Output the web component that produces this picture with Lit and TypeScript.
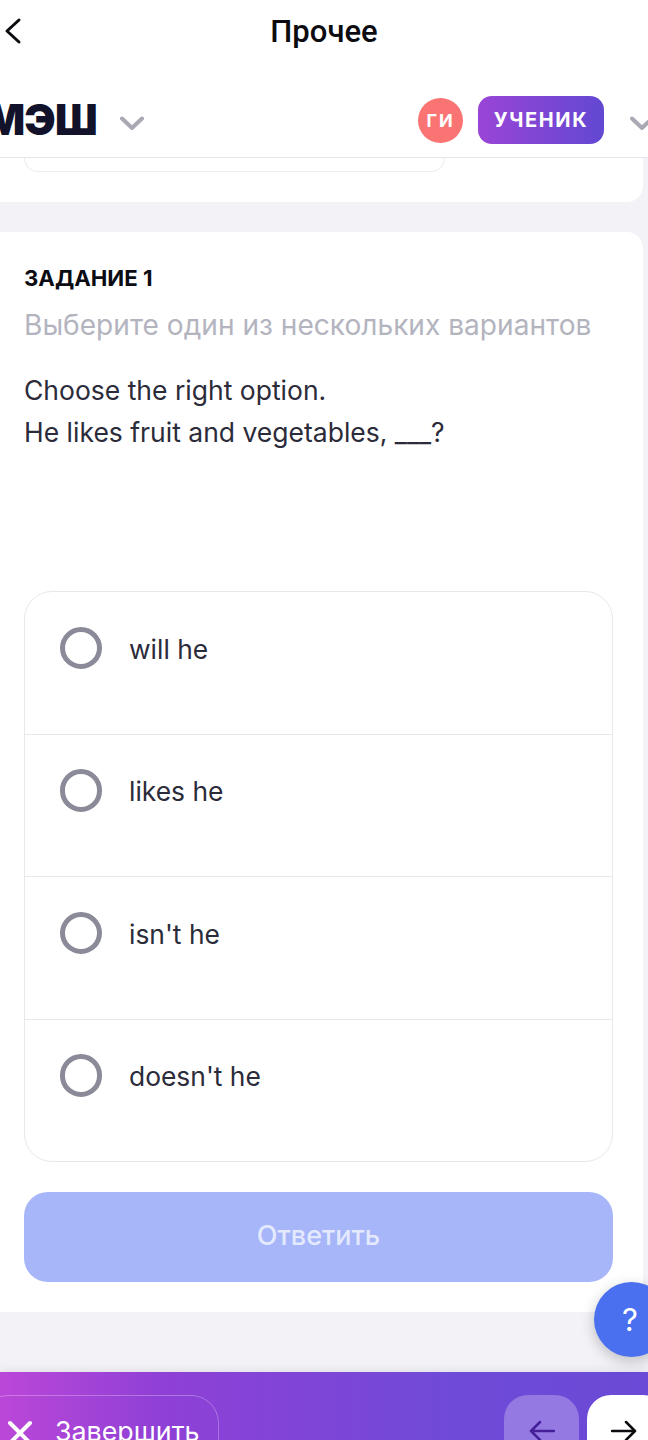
import { LitElement, html, css, svg } from "lit";
import { customElement } from "lit/decorators.js";

const chevron = svg`<path d="M2 2.5 L12 12 L22 2.5" fill="none" stroke="#a9a9b4" stroke-width="4" stroke-linecap="round" stroke-linejoin="round"/>`;

@customElement("app-root")
export class AppRoot extends LitElement {
  static styles = css`
    :host { display: block; width: 648px; height: 1440px; overflow: hidden; position: relative; background: #f2f2f7; font-family: Inter, "Noto Sans", sans-serif; }
    .page { width: 648px; height: 1440px; display: flex; flex-direction: column; overflow: hidden; }
    .top { background: #fff; height: 64px; flex: none; display: flex; align-items: center; justify-content: center; position: relative; }
    .back { position: absolute; left: 4px; top: 17px; width: 18px; height: 28px; }
    .title { font: 500 31px/32px Roboto, sans-serif; color: #0b0b10; }
    .brand { background: #fff; height: 94px; flex: none; box-sizing: border-box; border-bottom: 1px solid #e6e6ea; display: flex; align-items: center; position: relative; overflow: hidden; padding-top: 19px; }
    .logo { font: 900 42px/48px Inter, sans-serif; color: #12122a; margin-left: -15px; letter-spacing: -0.8px; }
    .chev { width: 24px; height: 14px; flex: none; }
    .chev1 { margin-left: 23px; margin-top: 6px; }
    .spacer { flex: 1; }
    .avatar { width: 45px; height: 45px; border-radius: 50%; background: #fa7474; color: #fff; font: 700 18px/45px Inter, sans-serif; letter-spacing: 2px; text-align: center; flex: none; margin-right: 15px; }
    .role { width: 126px; height: 48px; border-radius: 14px; background: linear-gradient(90deg, #9a45d6, #6248d2); color: #fff; font: 700 20px/48px Inter, sans-serif; letter-spacing: 1.6px; text-align: center; flex: none; margin-right: 26px; }
    .chev2 { margin-right: -6px; margin-top: 6px; }
    .prev { background: #fff; height: 44px; width: 643px; flex: none; border-radius: 0 0 16px 0; }
    .prev-inner { margin-left: 24px; width: 421px; height: 14px; box-sizing: border-box; border: 1px solid #ededf0; border-top: none; border-radius: 0 0 24px 24px; }
    .card { margin-top: 30px; background: #fff; width: 643px; height: 1080px; flex: none; border-radius: 0 16px 16px 0; box-sizing: border-box; padding: 30px 30px 30px 24px; display: flex; flex-direction: column; }
    .task { font: 700 22.2px/32px Inter, sans-serif; color: #0c0c14; letter-spacing: 0; }
    .hint { font: 400 28.1px/40px Inter, sans-serif; color: #b4b4bf; margin-top: 11px; white-space: nowrap; }
    .q { font: 400 26.5px/42px Inter, sans-serif; color: #2b2b3a; margin-top: 24px; height: 222px; flex: none; }
    .opts { border: 1px solid #e8e8ec; border-radius: 28px; display: flex; flex-direction: column; height: 571px; box-sizing: border-box; flex: none; }
    .opt { flex: 1; display: flex; box-sizing: border-box; padding: 35px 0 0 34.5px; border-top: 1px solid #e8e8ec; }
    .opt:first-child { border-top: none; }
    .radio { width: 42.5px; height: 42.5px; margin-top: -0.5px; border-radius: 50%; border: 5px solid #8a8a98; box-sizing: border-box; flex: none; margin-right: 27px; }
    .lbl { font: 400 26.4px/44px Inter, sans-serif; color: #2b2b3a; margin-top: -0.5px; }
    .submit { margin-top: 30px; height: 90px; border-radius: 24px; background: #a6b6f9; color: #e4e9fe; font: 500 27px/88px Inter, sans-serif; text-align: center; flex: none; }
    .bar { margin-top: 60px; height: 68px; flex: none; background: linear-gradient(90deg, #bb47d8 0%, #8f40d6 25%, #6f4ad8 70%, #6a4ad6 100%); display: flex; align-items: flex-start; padding-top: 23px; box-sizing: border-box; overflow: hidden; box-shadow: 0 -2px 10px rgba(0,0,0,.08); position: relative; }
    .finish { margin-left: -20px; width: 239px; height: 90px; box-sizing: border-box; border: 1px solid rgba(255,255,255,.28); border-radius: 28px; display: flex; align-items: flex-start; gap: 22px; padding: 19px 0 0 26px; color: #fff; font: 400 26.8px/32px Inter, sans-serif; flex: none; }
    .x { width: 26px; height: 26px; margin-top: 5px; flex: none; }
    .navs { display: flex; gap: 8px; margin-right: -19px; flex: none; }
    .nav { width: 75px; height: 90px; border-radius: 24px; display: flex; justify-content: center; padding-top: 25px; box-sizing: border-box; }
    .nav.a { background: #9479e2; }
    .nav.b { background: #fff; width: 80px; padding-right: 6px; }
    .nav svg { width: 26px; height: 22px; }
    .fab { position: absolute; left: 594px; top: 1282px; width: 75px; height: 75px; border-radius: 50%; background: #4a70f0; color: #fff; box-shadow: 0 4px 14px rgba(0,0,0,.22); font: 400 31px/75px Inter, sans-serif; padding-left: 28px; box-sizing: border-box; }
  `;

  render() {
    const opts = ["will he", "likes he", "isn't he", "doesn't he"];
    return html`
      <div class="page">
        <div class="top">
          <svg class="back" viewBox="0 0 18 28"><path d="M15 3 L3 14 L15 25" fill="none" stroke="#0b0b10" stroke-width="3" stroke-linecap="round" stroke-linejoin="round"/></svg>
          <div class="title">Прочее</div>
        </div>
        <div class="brand">
          <div class="logo">МЭШ</div>
          <svg class="chev chev1" viewBox="0 0 24 14">${chevron}</svg>
          <div class="spacer"></div>
          <div class="avatar">ГИ</div>
          <div class="role">УЧЕНИК</div>
          <svg class="chev chev2" viewBox="0 0 24 14">${chevron}</svg>
        </div>
        <div class="prev"><div class="prev-inner"></div></div>
        <div class="card">
          <div class="task">ЗАДАНИЕ 1</div>
          <div class="hint">Выберите один из нескольких вариантов</div>
          <div class="q">Choose the right option.<br />He likes fruit and vegetables, ___?</div>
          <div class="opts">
            ${opts.map((o) => html`<div class="opt"><div class="radio"></div><div class="lbl">${o}</div></div>`)}
          </div>
          <div class="submit">Ответить</div>
        </div>
        <div class="bar">
          <div class="finish">
            <svg class="x" viewBox="0 0 26 26"><path d="M3 3 L23 23 M23 3 L3 23" stroke="#fff" stroke-width="4" stroke-linecap="round"/></svg>
            <span>Завершить</span>
          </div>
          <div class="spacer"></div>
          <div class="navs">
            <div class="nav a"><svg viewBox="0 0 26 22"><path d="M25 11 H2 M11 2 L2 11 L11 20" fill="none" stroke="#45209a" stroke-width="2.5" stroke-linecap="round" stroke-linejoin="round"/></svg></div>
            <div class="nav b"><svg viewBox="0 0 26 22"><path d="M1 11 H24 M15 2 L24 11 L15 20" fill="none" stroke="#0b0b10" stroke-width="2.5" stroke-linecap="round" stroke-linejoin="round"/></svg></div>
          </div>
        </div>
      </div>
      <div class="fab">?</div>
    `;
  }
}
